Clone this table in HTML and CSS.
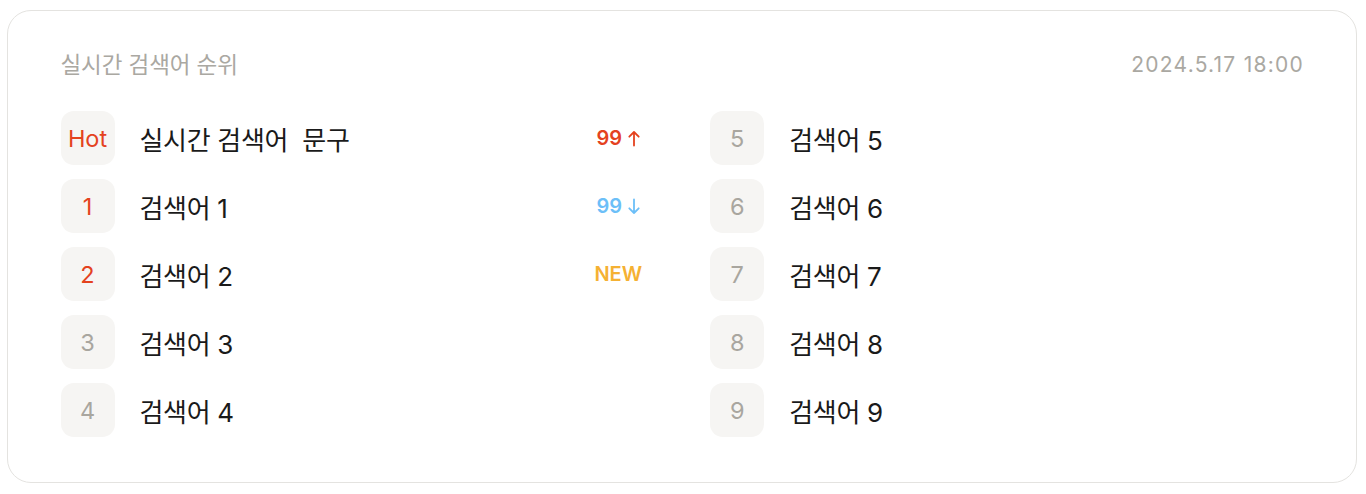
FILE: index.html
```html
<!DOCTYPE html>
<html lang="ko">
<head>
<meta charset="utf-8">
<title>실시간 검색어 순위</title>
<link rel="stylesheet" href="styles.css">
</head>
<body>
<section class="card">
  <header class="card-head">
    <h2 class="title">실시간 검색어 순위</h2>
    <span class="date">2024.5.17 18:00</span>
  </header>
  <div class="cols">
    <ol class="list">
      <li class="row">
        <span class="badge hot">Hot</span>
        <span class="term">실시간 검색어&nbsp; 문구</span>
        <span class="delta up">99
          <svg class="arrow" viewBox="0 0 12 17" width="12" height="17"><path d="M6 15.5V2M1.3 6.7L6 2l4.7 4.7" fill="none" stroke="currentColor" stroke-width="1.8" stroke-linecap="round" stroke-linejoin="round"/></svg>
        </span>
      </li>
      <li class="row">
        <span class="badge hot">1</span>
        <span class="term">검색어 1</span>
        <span class="delta down">99
          <svg class="arrow" viewBox="0 0 12 17" width="12" height="17"><path d="M6 1.5V15M1.3 10.3L6 15l4.7-4.7" fill="none" stroke="currentColor" stroke-width="1.8" stroke-linecap="round" stroke-linejoin="round"/></svg>
        </span>
      </li>
      <li class="row">
        <span class="badge hot">2</span>
        <span class="term">검색어 2</span>
        <span class="delta new">NEW</span>
      </li>
      <li class="row">
        <span class="badge">3</span>
        <span class="term">검색어 3</span>
      </li>
      <li class="row">
        <span class="badge">4</span>
        <span class="term">검색어 4</span>
      </li>
    </ol>
    <ol class="list">
      <li class="row"><span class="badge">5</span><span class="term">검색어 5</span></li>
      <li class="row"><span class="badge">6</span><span class="term">검색어 6</span></li>
      <li class="row"><span class="badge">7</span><span class="term">검색어 7</span></li>
      <li class="row"><span class="badge">8</span><span class="term">검색어 8</span></li>
      <li class="row"><span class="badge">9</span><span class="term">검색어 9</span></li>
    </ol>
  </div>
</section>
</body>
</html>
```
FILE: styles.css
```css
* { box-sizing: border-box; }
html, body { margin: 0; background: #ffffff; }
body {
  padding: 10px 9px 0 7px;
  font-family: "Inter", "Noto Sans CJK KR", sans-serif;
  color: #1d1d1b;
}
.card {
  height: 473px;
  border: 1.5px solid #e4e3e0;
  border-radius: 24px;
  padding: 41px 53px 0 52.5px;
  background: #fff;
}
.card-head {
  display: flex;
  justify-content: space-between;
  align-items: center;
  height: 26px;
}
.title {
  margin: 0;
  font-size: 22.5px;
  font-weight: 400;
  line-height: 26px;
  color: #aaa8a2;
  letter-spacing: -0.1px;
}
.date {
  font-size: 21px;
  line-height: 26px;
  color: #aaa8a2;
  letter-spacing: 1.25px;
  margin-right: -1px;
}
.cols {
  margin-top: 33px;
  display: grid;
  grid-template-columns: 1fr 1fr;
  column-gap: 57px;
}
.list {
  list-style: none;
  margin: 0;
  padding: 0;
  display: flex;
  flex-direction: column;
  gap: 14px;
}
.row {
  display: flex;
  align-items: center;
  height: 54px;
}
.badge {
  flex: none;
  width: 54px;
  height: 54px;
  border-radius: 13px;
  background: #f6f5f3;
  display: flex;
  align-items: center;
  justify-content: center;
  font-size: 23.5px;
  color: #a9a69f;
}
.badge.hot { color: #e4421e; }
.term {
  flex: 1;
  margin-left: 25px;
  font-size: 26px;
  color: #1a1a1a;
  letter-spacing: -0.3px;
}
.delta {
  flex: none;
  width: 64px;
  margin-right: 3px;
  display: flex;
  align-items: center;
  justify-content: center;
  gap: 6px;
  font-size: 20px;
  font-weight: 600;
}
.delta.up { color: #e4421e; }
.delta.down { color: #6cbff8; }
.delta.new { color: #f5b133; font-size: 20px; }
.arrow { display: block; }
```
